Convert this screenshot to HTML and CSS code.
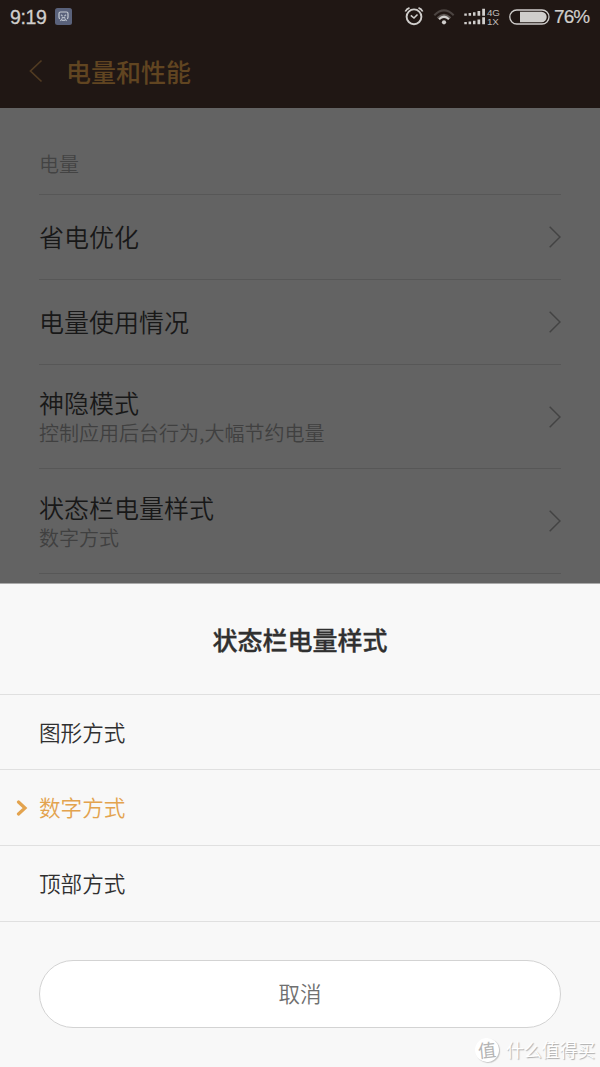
FILE: index.html
```html
<!DOCTYPE html>
<html lang="zh-CN">
<head>
<meta charset="utf-8">
<title>电量和性能</title>
<link rel="stylesheet" href="styles.css">
</head>
<body>
<div class="screen">
  <header class="top">
    <div class="status">
      <span class="clock">9:19</span>
      <svg class="app-icon" width="17" height="17" viewBox="0 0 17 17"><rect width="17" height="17" rx="2.500" fill="#5a627b"/><path d="M5 10.800q-1-.300-1-1.500V5.500q0-1.500 1.500-1.500h6q1.500 0 1.500 1.500v3.800q0 1.200-1 1.500" fill="none" stroke="#c5cad2" stroke-width="1.200"/><path d="M6 6.800l1.600 1.400M11 6.800L9.400 8.200M6.800 9.600h3.400M7.300 10.500l-2 2.500M9.700 10.500l2 2.500M6.800 12.300h3.400" fill="none" stroke="#b5bbc6" stroke-width="1.200"/></svg>
      <span class="spacer"></span>
      <svg class="alarm" width="20" height="20" viewBox="0 0 20 20" fill="none" stroke="#cfcdcb"><circle cx="10" cy="10.800" r="7.400" stroke-width="1.900"/><path d="M6.800 9.300l3.200 2.700 3.500-3.500" stroke-width="1.600"/><path d="M1.300 5.500Q2.600 2.800 5.500 1.900M18.700 5.500Q17.400 2.800 14.500 1.900" stroke-width="1.700"/></svg>
      <svg class="wifi" width="22" height="18" viewBox="0 0 22 18" fill="none"><path d="M1.300 7.200Q11-2.500 20.700 7.200" stroke="#4b4441" stroke-width="2"/><path d="M4.500 10Q11 3.500 17.500 10" stroke="#5d5754" stroke-width="2"/><path d="M6 11.200Q11 6.300 16 11.200" stroke="#d0cecc" stroke-width="2.200"/><circle cx="11" cy="14.300" r="2.100" fill="#d0cecc"/></svg>
      <svg class="signal" width="22" height="18" viewBox="0 0 22 18" fill="#d0cecc"><path d="M.3 5.400h2.500v2.300H.3zM4.600 5h2.500v2.700H4.600zM9 4.200h2.500v3.500H9zM13.500 3h2.700v4.700h-2.700zM18.200.800H21v6.900h-2.800zM.3 13.900h2.500v2.300H.3zM4.600 13.500h2.500v2.700H4.600zM9 12.700h2.500v3.500H9zM13.500 11.500h2.700v4.700h-2.700zM18.200 9.300H21v6.900h-2.800z"/></svg>
      <span class="network"><span>4G</span><span>1X</span></span>
      <svg class="battery" width="41" height="16" viewBox="0 0 41 16"><rect x=".8" y="1" width="39.200" height="14" rx="7" fill="none" stroke="#cfcdcb" stroke-width="1.300"/><path d="M11 2.800h21.500a5.200 5.200 0 0 1 0 10.400H11z" fill="#d0cecc"/></svg>
      <span class="percent">76%</span>
    </div>
    <div class="titlebar">
      <svg class="back" width="14" height="24" viewBox="0 0 14 24" fill="none" stroke="#513b22" stroke-width="1.700"><path d="M12.500 1.500L1.500 12l11 10.500"/></svg>
      <h1 class="page-title">电量和性能</h1>
    </div>
  </header>
  <main class="settings">
    <div class="section">电量</div>
    <div class="row"><div class="label">省电优化</div><svg class="go" viewBox="0 0 12 22"><path d="M.7.700L11 11 .7 21.300"/></svg></div>
    <div class="row"><div class="label">电量使用情况</div><svg class="go" viewBox="0 0 12 22"><path d="M.7.700L11 11 .7 21.300"/></svg></div>
    <div class="row double"><div class="pair"><div class="label">神隐模式</div><div class="hint">控制应用后台行为,大幅节约电量</div></div><svg class="go" viewBox="0 0 12 22"><path d="M.7.700L11 11 .7 21.300"/></svg></div>
    <div class="row double last"><div class="pair"><div class="label">状态栏电量样式</div><div class="hint">数字方式</div></div><svg class="go" viewBox="0 0 12 22"><path d="M.7.700L11 11 .7 21.300"/></svg></div>
  </main>
  <section class="sheet">
    <h2 class="sheet-title">状态栏电量样式</h2>
    <div class="option">图形方式</div>
    <div class="option selected"><svg class="mark" width="12" height="16" viewBox="0 0 12 16"><path d="M2.500 2l6.500 6-6.500 6" fill="none" stroke="#e3a34e" stroke-width="3.200" stroke-linecap="round"/></svg><span>数字方式</span></div>
    <div class="option third">顶部方式</div>
    <button class="cancel">取消</button>
    <div class="watermark"><span class="seal">值</span><span class="brand">什么值得买</span></div>
  </section>
</div>
</body>
</html>
```
FILE: styles.css
```css
* { box-sizing: border-box; }
body { margin: 0; font-family: "Noto Sans CJK SC", sans-serif; font-weight: 350; }
.screen { width: 600px; height: 1067px; overflow: hidden; display: flex; flex-direction: column; background: #636363; }
.top { height: 108px; background: #201714; flex: none; }
.status { height: 34px; display: flex; align-items: center; padding: 0 10px; color: #d0cecc; font-family: "Liberation Sans", sans-serif; font-weight: 400; }
.clock { font-size: 19.5px; line-height: 34px; width: 45px; letter-spacing: -.4px; -webkit-text-stroke: .3px #d0cecc; }
.app-icon { margin-top: -1px; }
.spacer { flex: 1; }
.alarm { margin-right: 9px; margin-top: -2px; }
.wifi { margin-right: 9px; }
.signal { margin-right: 1px; }
.network { width: 15px; display: flex; flex-direction: column; font-size: 9.8px; line-height: 9px; letter-spacing: -.3px; margin-right: 7px; color: #bfbcb9; }
.battery { margin-right: 4px; }
.percent { font-size: 19px; width: 36px; letter-spacing: -.9px; line-height: 34px; -webkit-text-stroke: .2px #d0cecc; }
.titlebar { height: 74px; display: flex; align-items: center; padding-left: 29px; }
.page-title { margin: 0 0 0 23px; font-size: 25px; line-height: 74px; height: 74px; font-weight: 500; color: #614521; }
.settings { height: 475px; padding: 0 39px; flex: none; }
.section { height: 87px; padding-top: 41px; font-size: 20px; line-height: 30px; color: #434343; border-bottom: 1px solid #575757; }
.row { height: 85px; display: flex; align-items: center; justify-content: space-between; border-bottom: 1px solid #575757; }
.double { height: 104px; }
.last { height: 105px; }
.pair { padding-top: 2px; }
.row .label { font-size: 25px; line-height: 31px; color: #181818; padding-bottom: 2px; }
.pair .label { padding-bottom: 0; }
.hint { font-size: 20px; line-height: 30px; color: #404040; }
.go { width: 12px; height: 22px; flex: none; fill: none; stroke: #434343; stroke-width: 1.5; }
.sheet { flex: 1; background: #f8f8f8; border-top: 1px solid #aaa; display: flex; flex-direction: column; }
.sheet-title { margin: 0; height: 110px; text-align: center; font-size: 25px; line-height: 110px; font-weight: 500; -webkit-text-stroke: .35px #303030; color: #303030; flex: none; }
.option { height: 75px; border-top: 1px solid #e0e0e0; padding-left: 39px; font-size: 21.6px; line-height: 73px; color: #303030; flex: none; }
.selected { height: 76px; display: flex; align-items: center; padding-left: 16px; color: #e3a34e; }
.selected span { line-height: 72px; padding-bottom: 2px; }
.mark { margin-right: 11px; }
.third { height: 77px; border-bottom: 1px solid #e0e0e0; }
.cancel { width: 522px; height: 68px; margin: 38px auto 0; flex: none; border: 1px solid #d3d3d3; border-radius: 34px; background: #fff; font: 350 21.5px/64px "Noto Sans CJK SC", sans-serif; color: #707070; padding: 0 0 2px; }
.watermark { display: flex; align-items: center; justify-content: flex-end; gap: 7px; height: 28px; margin-top: 8px; padding-right: 5px; color: #fff; text-shadow: 1px 1px 1px #aaa; }
.seal { width: 24px; height: 24px; border-radius: 50%; background: #fff; box-shadow: 1px 1px 1px #c4c4c4; color: #b4b4b4; text-shadow: none; text-align: center; font-size: 18px; line-height: 23px; font-weight: 400; transform: rotate(-6deg); }
.brand { font-size: 18px; line-height: 27px; height: 28px; letter-spacing: -.2px; }
```
